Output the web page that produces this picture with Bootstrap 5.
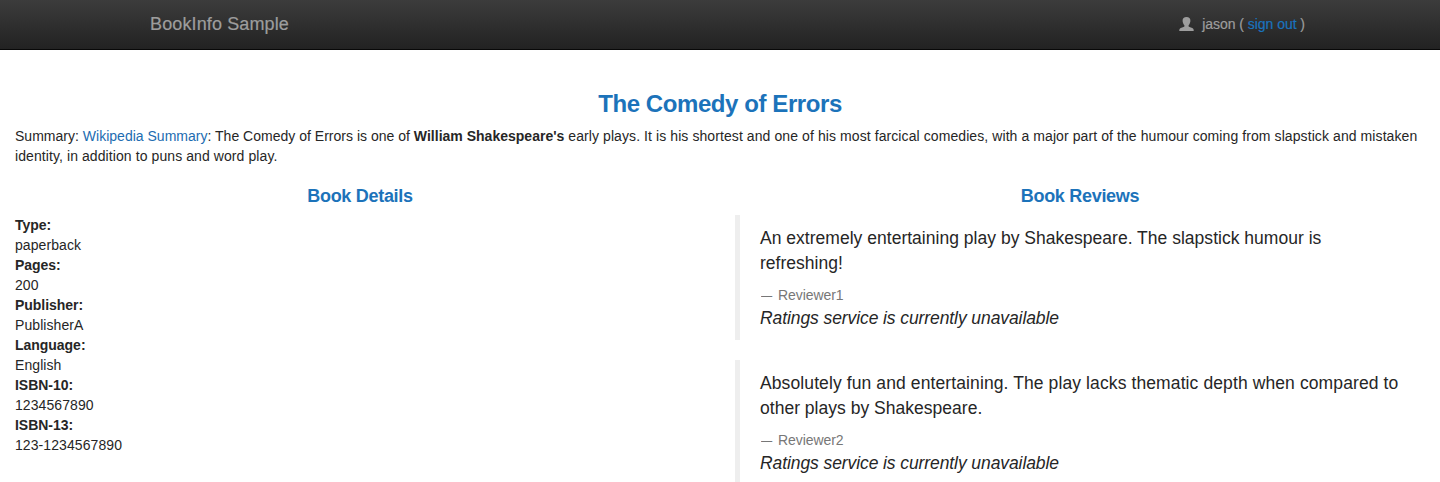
<!DOCTYPE html>
<html lang="en">
<head>
<meta charset="utf-8">
<meta name="viewport" content="width=device-width, initial-scale=1">
<title>BookInfo Sample</title>
<link href="https://cdn.jsdelivr.net/npm/bootstrap@5.3.0/dist/css/bootstrap.min.css" rel="stylesheet">
<style>
  body { font: 14px/20px "Liberation Sans", Arial, sans-serif; color: #262626; background: #fff; overflow: hidden; }
  a { color: #1c6cb1; text-decoration: none; }
  .site-bar { height: 50px; padding: 0 0 2px; background: linear-gradient(#3c3c3c, #222); border-bottom: 1px solid #080808; }
  .site-bar .bar-inner { width: 1170px; max-width: 1170px; padding: 0 0 0 15px; }
  .site-bar .navbar-brand { font-size: 18px; line-height: 20px; color: #9d9d9d; padding: 0; margin: 0; letter-spacing: .12px; -webkit-text-stroke: .2px; }
  .user-info { color: #9d9d9d; line-height: 20px; letter-spacing: -.04px; -webkit-text-stroke: .2px; }
  .user-info a { color: #1a73be; }
  h3, h4 { font-weight: 700; color: #1c73ba; }
  h3 { font-size: 24px; line-height: 26px; margin: 41px 0 9px; letter-spacing: -.42px; }
  h4 { font-size: 18px; line-height: 20px; margin: 0 0 9px; letter-spacing: -.3px; }
  .main-area { padding: 0 15px; }
  .summary { margin: 0 0 20px; letter-spacing: .012px; }
  .tail { letter-spacing: .086px; }
  .columns { --bs-gutter-x: 30px; }
  dl dd { margin: 0; letter-spacing: .08px; }
  dl dt { letter-spacing: -.03px; }
  .review { border-left: 5px solid #eee; padding: 11px 20px 9px; margin: 0 0 20px; font-size: 17.5px; line-height: 25px; }
  .review p { margin: 0 0 9px; letter-spacing: .02px; }
  .review .spaced { letter-spacing: .105px; }
  .review small { display: flex; margin-bottom: 1px; font-size: 14px; line-height: 20px; color: #777; letter-spacing: -.08px; }
  .review .dash { width: 18px; padding-left: 1px; transform: scaleX(.8); transform-origin: 1px 50%; }
  .review i { letter-spacing: -.09px; }
</style>
</head>
<body>
<nav class="navbar site-bar">
  <div class="container bar-inner d-flex justify-content-between">
    <a class="navbar-brand" href="#">BookInfo Sample</a>
    <div class="user-info d-flex align-items-center">
      <svg class="me-2" width="15" height="14" viewBox="0 0 15 14" fill="#9d9d9d" aria-hidden="true"><path d="M7.500 0C10 0 11.500 1.300 11.400 3.700C11.400 5.600 10.500 7.200 9.600 8.200V9.600C10.300 10.400 13.500 10.900 14.200 11.700C14.700 12.200 14.700 13 14.700 14H.3C.3 13 .3 12.200 .8 11.700C1.500 10.900 4.700 10.400 5.400 9.600V8.200C4.500 7.200 3.600 5.600 3.600 3.700C3.500 1.300 5 0 7.500 0Z"/></svg>
      <span>jason ( <a href="#">sign out</a> )</span>
    </div>
  </div>
</nav>
<main class="container-fluid main-area">
  <h3 class="text-center">The Comedy of Errors</h3>
  <p class="summary">Summary: <a href="#">Wikipedia Summary</a>: The Comedy of Errors is one of <b>William Shakespeare's</b> <span class="tail">early plays. It is his shortest and one of his most farcical comedies, with a major part of the humour coming from slapstick and mistaken identity, in addition to puns and word play.</span></p>
  <div class="row columns">
    <section class="col-6">
      <h4 class="text-center">Book Details</h4>
      <dl>
        <dt>Type:</dt><dd>paperback</dd>
        <dt>Pages:</dt><dd>200</dd>
        <dt>Publisher:</dt><dd>PublisherA</dd>
        <dt>Language:</dt><dd>English</dd>
        <dt>ISBN-10:</dt><dd>1234567890</dd>
        <dt>ISBN-13:</dt><dd>123-1234567890</dd>
      </dl>
    </section>
    <section class="col-6">
      <h4 class="text-center">Book Reviews</h4>
      <blockquote class="review">
        <p>An extremely entertaining play by Shakespeare. The slapstick humour is refreshing!</p>
        <small><span class="dash">—</span>Reviewer1</small>
        <i>Ratings service is currently unavailable</i>
      </blockquote>
      <blockquote class="review">
        <p><span class="spaced">Absolutely fun and entertaining. The play lacks thematic depth when compared to</span> other plays by Shakespeare.</p>
        <small><span class="dash">—</span>Reviewer2</small>
        <i>Ratings service is currently unavailable</i>
      </blockquote>
    </section>
  </div>
</main>
<script src="https://cdn.jsdelivr.net/npm/bootstrap@5.3.0/dist/js/bootstrap.bundle.min.js"></script>
</body>
</html>
